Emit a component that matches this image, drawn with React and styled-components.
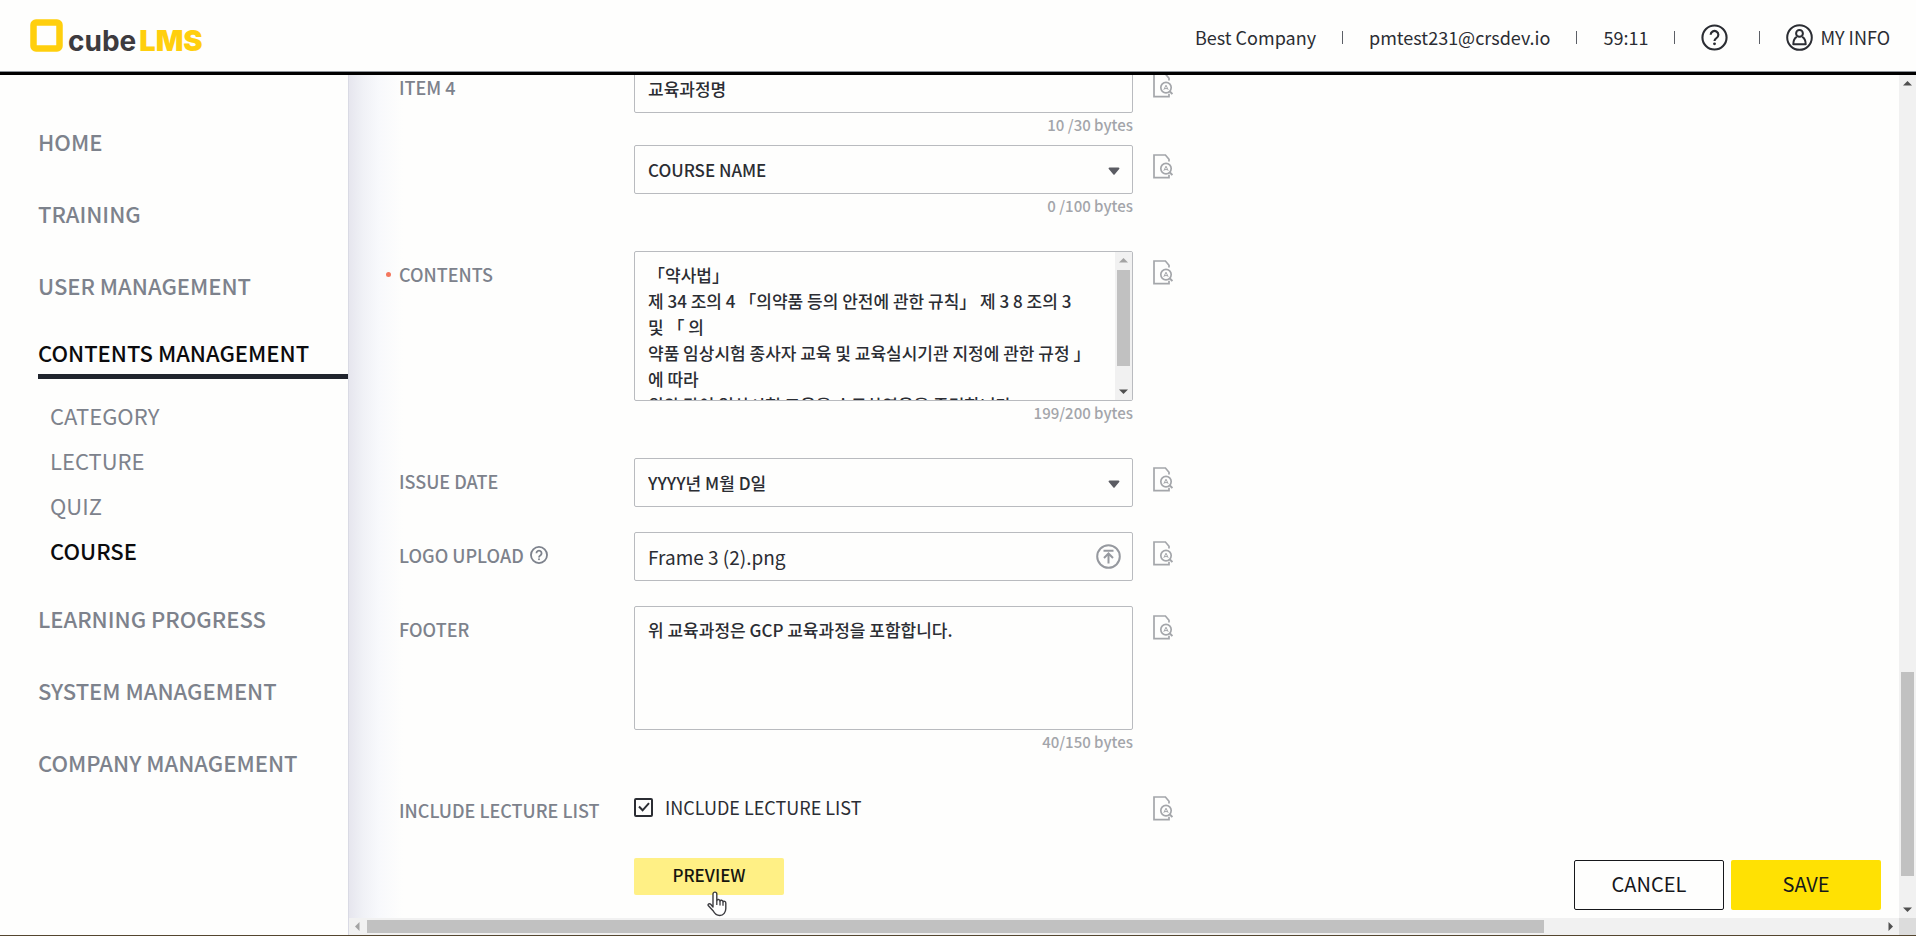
import React, { useState } from "react";
import styled, { ThemeProvider, createGlobalStyle } from "styled-components";

const theme = {
  colors: {
    bg: "#fefefd",
    text: "#2b2d33",
    muted: "#7d828c",
    hint: "#a3a5aa",
    border: "#b9bbbf",
    dark: "#20242d",
    accent: "#ffe103",
    brand: "#ffcf0d",
  },
};

const GlobalStyle = createGlobalStyle`
  * {
    box-sizing: border-box;
  }

  body {
    margin: 0;
    background: #fefefd;
  }

  body, button, input, select, textarea {
    font-family: "Noto Sans CJK KR", "Noto Sans", sans-serif;
  }
`;

const Page = styled.div`
  display: flex;
  flex-direction: column;
  height: 100vh;
  color: ${({ theme }) => theme.colors.text};
  background: ${({ theme }) => theme.colors.bg};
  border-bottom: 1px solid #54462f;
`;

const Header = styled.header`
  display: flex;
  flex: none;
  align-items: center;
  justify-content: space-between;
  height: 75px;
  padding: 2px 26px 0 30px;
  border-bottom: 3px solid #000;
  box-shadow: inset 0 -1px #8d9299;
`;

const Logo = styled.a`
  display: flex;
  align-items: flex-start;
  gap: 5px;
  height: 37px;
  text-decoration: none;
`;

const LogoText = styled.span`
  display: flex;
  align-items: baseline;
  gap: 3px;
  padding-top: 6px;
  font-family: Inter, sans-serif;
  line-height: 32px;
`;

const LogoCube = styled.span`
  color: #3d3b3f;
  font-size: 28px;
  font-weight: 700;
`;

const LogoLms = styled.span`
  color: ${({ theme }) => theme.colors.brand};
  font-size: 29px;
  font-weight: 900;
`;

const UserBar = styled.div`
  display: flex;
  align-items: center;
  gap: 26px;
  font-size: 18px;
  line-height: 26px;
`;

const Divider = styled.span`
  width: 1px;
  height: 13px;
  background: #5c5f66;
`;

const HeaderButton = styled.button`
  display: flex;
  align-items: center;
  gap: 7px;
  padding: 0;
  border: 0;
  background: none;
  color: inherit;
  font-size: 18px;
  line-height: 26px;
  cursor: pointer;
`;

const HelpButton = styled(HeaderButton)`
  padding-right: 5px;
`;

const Body = styled.div`
  display: flex;
  flex: 1;
  min-height: 0;
`;

const Sidebar = styled.nav`
  flex: none;
  width: 349px;
  padding: 30px 0 0 38px;
  border-right: 1px solid #d9dae4;
`;

const MenuLink = styled.a`
  display: block;
  color: ${({ theme, $active }) => ($active ? "#0b0b0d" : theme.colors.muted)};
  font-size: 22px;
  font-weight: 500;
  line-height: ${({ $active }) => ($active ? "43px" : "72px")};
  padding-top: ${({ $active }) => ($active ? "10px" : "0")};
  border-bottom: ${({ theme, $active }) =>
    $active ? `5px solid ${theme.colors.dark}` : "0"};
  text-decoration: none;
`;

const SubMenu = styled.div`
  padding: 14px 0 9px 12px;
`;

const SubLink = styled.a`
  display: block;
  color: ${({ theme, $active }) => ($active ? "#0b0b0d" : theme.colors.muted)};
  font-size: 22px;
  font-weight: ${({ $active }) => ($active ? 500 : 400)};
  line-height: 45px;
  text-decoration: none;
`;

const Main = styled.main`
  position: relative;
  display: grid;
  flex: 1;
  grid-template-columns: 1fr 17px;
  grid-template-rows: minmax(0, 1fr) 17px;
  min-width: 0;
`;

const Content = styled.div`
  display: flex;
  flex-direction: column;
  justify-content: flex-end;
  overflow: hidden;
  background: linear-gradient(
    to right,
    #e6e6ee,
    #f0f1f6 14px,
    #f8f9fc 30px,
    #fefefd 54px
  );
`;

const Form = styled.form`
  display: flex;
  flex-direction: column;
  gap: 25px;
  padding: 0 0 23px 50px;
`;

const Row = styled.div`
  display: grid;
  grid-template-columns: 235px 499px 40px;
`;

const LabelCell = styled.div`
  position: relative;
  display: flex;
  align-items: center;
  gap: 6px;
  height: 46px;
  color: ${({ theme }) => theme.colors.muted};
`;

const Label = styled.label`
  font-size: 18px;
  font-weight: 500;
`;

const Required = styled.span`
  position: absolute;
  left: -13px;
  width: 5px;
  height: 5px;
  border-radius: 50%;
  background: #f4775e;
`;

const Field = styled.div`
  position: relative;
`;

const TextInput = styled.input`
  display: block;
  width: 100%;
  height: 49px;
  padding: 0 13px;
  border: 1px solid ${({ theme }) => theme.colors.border};
  border-radius: 2px;
  outline: 0;
  background: transparent;
  color: ${({ theme }) => theme.colors.text};
  font-size: ${({ $large }) => ($large ? "19px" : "17px")};
  font-weight: ${({ $large }) => ($large ? 400 : 500)};
`;

const Select = styled.select`
  display: block;
  width: 100%;
  height: 49px;
  padding: 0 13px;
  border: 1px solid ${({ theme }) => theme.colors.border};
  border-radius: 2px;
  appearance: none;
  background: transparent;
  color: ${({ theme }) => theme.colors.text};
  font-size: 17px;
  font-weight: 500;
`;

const TextArea = styled.textarea`
  display: block;
  width: 100%;
  height: ${({ $tall }) => ($tall ? "150px" : "124px")};
  padding: 10px 30px 10px 13px;
  overflow: hidden;
  border: 1px solid ${({ theme }) => theme.colors.border};
  border-radius: 2px;
  outline: 0;
  background: transparent;
  color: ${({ theme }) => theme.colors.text};
  font-size: 17px;
  font-weight: 500;
  line-height: 26px;
  resize: none;
`;

const Bytes = styled.p`
  height: 32px;
  margin: 0;
  color: ${({ theme }) => theme.colors.hint};
  font-size: 15px;
  font-weight: 500;
  line-height: 24px;
  text-align: right;
`;

const SelectArrow = styled.svg`
  position: absolute;
  top: 22px;
  right: 13px;
  pointer-events: none;
`;

const UploadButton = styled.button`
  position: absolute;
  top: 12px;
  right: 12px;
  display: flex;
  padding: 0;
  border: 0;
  background: none;
  color: #96999f;
  cursor: pointer;
`;

const IconButton = styled.button`
  display: flex;
  align-self: start;
  margin: 9px 0 0 20px;
  padding: 0;
  border: 0;
  background: none;
  color: #a4a6aa;
  cursor: pointer;
`;

const CheckLabel = styled.label`
  position: relative;
  display: flex;
  align-items: center;
  gap: 12px;
  height: 40px;
  font-size: 18px;
`;

const CheckBox = styled.input`
  width: 19px;
  height: 19px;
  margin: 0;
  border: 2px solid ${({ theme }) => theme.colors.text};
  border-radius: 2px;
  appearance: none;
`;

const CheckMark = styled.svg`
  position: absolute;
  left: 4px;
  pointer-events: none;
`;

const PreviewButton = styled.button`
  position: relative;
  grid-column: 2;
  width: 150px;
  height: 37px;
  padding: 0 0 4px;
  border: 0;
  border-radius: 2px;
  background: #fff085;
  color: #16150f;
  font-size: 17px;
  font-weight: 500;
  cursor: pointer;
`;

const Pointer = styled.svg`
  position: absolute;
  top: 33px;
  left: 73px;
`;

const Actions = styled.div`
  position: absolute;
  right: 35px;
  bottom: 25px;
  display: flex;
  gap: 7px;
`;

const ActionButton = styled.button`
  width: 150px;
  height: 50px;
  padding: 0 0 3px;
  border: ${({ $primary }) => ($primary ? "0" : "1px solid #16171b")};
  border-radius: 2px;
  background: ${({ theme, $primary }) =>
    $primary ? theme.colors.accent : theme.colors.bg};
  color: #16171b;
  font-size: 20px;
  cursor: pointer;
`;

const ScrollTrack = styled.div`
  display: flex;
  flex-direction: ${({ $horizontal }) => ($horizontal ? "row" : "column")};
  align-items: center;
  background: #f1f1f1;
`;

const ScrollRail = styled.div`
  display: flex;
  flex: 1;
  flex-direction: inherit;
  align-self: stretch;
  margin: ${({ $horizontal }) => ($horizontal ? "2px 0" : "0 2px")};
`;

const ScrollSpace = styled.div`
  flex: ${({ $size }) => $size};
`;

const ScrollThumb = styled.div`
  flex: ${({ $size }) => $size};
  background: #c1c1c1;
`;

const AreaScroll = styled.div`
  position: absolute;
  top: 1px;
  right: 1px;
  display: flex;
  width: 17px;
  height: 148px;
`;

const Corner = styled.div`
  background: #dcdcdc;
`;

const arrows = {
  up: "M4 10.5h9L8.5 6z",
  down: "M4 6.5h9L8.5 11z",
  left: "M10.5 4v9L6 8.5z",
  right: "M6.5 4v9L11 8.5z",
};

const Arrow = ({ dir, color = "#505050" }) => (
  <svg width="17" height="17" aria-hidden="true">
    <path d={arrows[dir]} fill={color} />
  </svg>
);

const ScrollBar = ({ horizontal, before, thumb, after, startColor }) => (
  <ScrollTrack $horizontal={horizontal}>
    <Arrow dir={horizontal ? "left" : "up"} color={startColor} />
    <ScrollRail $horizontal={horizontal}>
      <ScrollSpace $size={before} />
      <ScrollThumb $size={thumb} />
      <ScrollSpace $size={after} />
    </ScrollRail>
    <Arrow dir={horizontal ? "right" : "down"} />
  </ScrollTrack>
);

const HelpIcon = ({ size, stroke }) => (
  <svg width={size} height={size} viewBox="0 0 28 28" fill="none" stroke="currentColor" strokeWidth={stroke}>
    <circle cx="14" cy="14" r="12.5" />
    <path d="M10 11.2a4 4 0 1 1 6 3.500c-1.400.8-2 1.400-2 3" />
    <circle cx="14" cy="20.6" r="1.500" fill="currentColor" stroke="none" />
  </svg>
);

const UserIcon = () => (
  <svg width="27" height="27" viewBox="0 0 27 27" fill="none" stroke="currentColor" strokeWidth="2">
    <circle cx="13.5" cy="13.5" r="12.3" />
    <circle cx="13.5" cy="9.4" r="3.400" />
    <path d="M10.800 12.800C8.600 14 7.300 16.500 7.300 20.200h12.400c0-3.700-1.300-6.200-3.500-7.400" strokeLinejoin="round" />
  </svg>
);

const PreviewIcon = () => (
  <svg width="20" height="25" viewBox="0 0 20 25" fill="none" stroke="currentColor" strokeWidth="1.7">
    <path d="M16 7.500V5.200L12.400 1H1v22.600h15v-2.800" />
    <circle cx="13" cy="14.6" r="5.200" />
    <path d="M10.800 16.800l2.200-4.600 2.200 4.600M11.700 15.600h2.600" strokeWidth="1" />
    <path d="M16.600 18.200l2.800 2.800" strokeWidth="2" />
  </svg>
);

const Preview = () => (
  <IconButton type="button" aria-label="Preview item">
    <PreviewIcon />
  </IconButton>
);

const DropArrow = () => (
  <SelectArrow width="12" height="8">
    <path d="M1.500.5h9a1 1 0 0 1 .7 1.600L6.800 7.200a1 1 0 0 1-1.600 0L.8 2.100A1 1 0 0 1 1.500.5z" fill="#5b5c63" />
  </SelectArrow>
);

const menu = [
  { name: "HOME" },
  { name: "TRAINING" },
  { name: "USER MANAGEMENT" },
  {
    name: "CONTENTS MANAGEMENT",
    active: true,
    children: ["CATEGORY", "LECTURE", "QUIZ", "COURSE"],
  },
  { name: "LEARNING PROGRESS" },
  { name: "SYSTEM MANAGEMENT" },
  { name: "COMPANY MANAGEMENT" },
];

const contentsText = [
  "「약사법」",
  "제 34 조의 4 「의약품 등의 안전에 관한 규칙」 제 3 8 조의 3",
  "및 「 의",
  "약품 임상시험 종사자 교육 및 교육실시기관 지정에 관한 규정 」",
  "에 따라",
  "위와 같이 임상시험 교육을 수료하였음을 증명합니다.",
].join("\n");

const App = () => {
  const [include, setInclude] = useState(true);

  return (
    <ThemeProvider theme={theme}>
      <GlobalStyle />
      <Page>
        <Header>
          <Logo href="#home">
            <svg width="33" height="33" viewBox="0 0 33 33" fill="none">
              <rect x="3.500" y="3.500" width="26" height="26" rx="2.500" stroke="#ffcf0d" strokeWidth="6.500" />
            </svg>
            <LogoText>
              <LogoCube>cube</LogoCube>
              <LogoLms>LMS</LogoLms>
            </LogoText>
          </Logo>
          <UserBar>
            <span>Best Company</span>
            <Divider />
            <span>pmtest231@crsdev.io</span>
            <Divider />
            <span>59:11</span>
            <Divider />
            <HelpButton type="button" aria-label="Help">
              <HelpIcon size={27} stroke={2.2} />
            </HelpButton>
            <Divider />
            <HeaderButton type="button">
              <UserIcon />
              MY INFO
            </HeaderButton>
          </UserBar>
        </Header>
        <Body>
          <Sidebar>
            {menu.map(({ name, active, children }) => (
              <React.Fragment key={name}>
                <MenuLink href="#menu" $active={active}>
                  {name}
                </MenuLink>
                {children && (
                  <SubMenu>
                    {children.map(child => (
                      <SubLink key={child} href="#menu" $active={child === "COURSE"}>
                        {child}
                      </SubLink>
                    ))}
                  </SubMenu>
                )}
              </React.Fragment>
            ))}
          </Sidebar>
          <Main>
            <Content>
              <Form>
                <Row>
                  <LabelCell>
                    <Label htmlFor="item4">ITEM 4</Label>
                  </LabelCell>
                  <Field>
                    <TextInput id="item4" defaultValue="교육과정명" />
                    <Bytes>10 /30 bytes</Bytes>
                  </Field>
                  <Preview />
                  <LabelCell />
                  <Field>
                    <Select aria-label="Item 4 value">
                      <option>COURSE NAME</option>
                    </Select>
                    <DropArrow />
                    <Bytes>0 /100 bytes</Bytes>
                  </Field>
                  <Preview />
                </Row>
                <Row>
                  <LabelCell>
                    <Required />
                    <Label htmlFor="contents">CONTENTS</Label>
                  </LabelCell>
                  <Field>
                    <TextArea id="contents" $tall defaultValue={contentsText} />
                    <AreaScroll>
                      <ScrollBar before={1} thumb={96} after={17} startColor="#a3a3a3" />
                    </AreaScroll>
                    <Bytes>199/200 bytes</Bytes>
                  </Field>
                  <Preview />
                </Row>
                <Row>
                  <LabelCell>
                    <Label htmlFor="issueDate">ISSUE DATE</Label>
                  </LabelCell>
                  <Field>
                    <Select id="issueDate">
                      <option>YYYY년 M월 D일</option>
                    </Select>
                    <DropArrow />
                  </Field>
                  <Preview />
                </Row>
                <Row>
                  <LabelCell>
                    <Label htmlFor="logoFile">LOGO UPLOAD</Label>
                    <HelpIcon size={18} stroke={2.8} />
                  </LabelCell>
                  <Field>
                    <TextInput id="logoFile" $large readOnly value="Frame 3 (2).png" />
                    <UploadButton type="button" aria-label="Upload logo">
                      <svg width="25" height="25" viewBox="0 0 25 25" fill="none" stroke="currentColor" strokeWidth="2">
                        <circle cx="12.5" cy="12.5" r="11.3" />
                        <path d="M7.500 6.800h10M12.500 19.500v-9.500M8 14l4.500-4.500L17 14" />
                      </svg>
                    </UploadButton>
                  </Field>
                  <Preview />
                </Row>
                <Row>
                  <LabelCell>
                    <Label htmlFor="footer">FOOTER</Label>
                  </LabelCell>
                  <Field>
                    <TextArea id="footer" defaultValue="위 교육과정은 GCP 교육과정을 포함합니다." />
                    <Bytes>40/150 bytes</Bytes>
                  </Field>
                  <Preview />
                </Row>
                <Row>
                  <LabelCell>
                    <Label htmlFor="includeList">INCLUDE LECTURE LIST</Label>
                  </LabelCell>
                  <CheckLabel>
                    <CheckBox
                      id="includeList"
                      type="checkbox"
                      checked={include}
                      onChange={() => setInclude(!include)}
                    />
                    {include && (
                      <CheckMark width="12" height="10" fill="none" stroke="#2b2d33" strokeWidth="2">
                        <path d="M1 4.500l3.600 3.800L11 1.200" />
                      </CheckMark>
                    )}
                    INCLUDE LECTURE LIST
                  </CheckLabel>
                  <Preview />
                </Row>
                <Row>
                  <PreviewButton type="button">
                    PREVIEW
                    <Pointer width="20" height="26" viewBox="0 0 20 26">
                      <path
                        d="M6 16V3a1.900 1.900 0 0 1 3.800 0v6.500c.3-1.500 3-1.300 3.200.5.5-1.200 2.800-1 3 .7.700-.9 2.800-.6 2.800 1.300v5.500c0 3.500-2.300 7-6 7-3.200 0-5-1.500-6.500-4.500L1.200 14.500c-.6-1.500 1.300-2.500 2.500-1.200z"
                        fill="#fff"
                        stroke="#3c3c40"
                        strokeWidth="1.4"
                        strokeLinejoin="round"
                      />
                      <path d="M9.800 9.500v4.500M13 10v4.500M16 10.800v4" stroke="#3c3c40" strokeWidth="1.3" />
                    </Pointer>
                  </PreviewButton>
                </Row>
              </Form>
            </Content>
            <ScrollBar before={580} thumb={204} after={25} />
            <ScrollBar horizontal before={1} thumb={1178} after={338} startColor="#a3a3a3" />
            <Corner />
            <Actions>
              <ActionButton type="button">CANCEL</ActionButton>
              <ActionButton type="button" $primary>
                SAVE
              </ActionButton>
            </Actions>
          </Main>
        </Body>
      </Page>
    </ThemeProvider>
  );
};

export default App;
